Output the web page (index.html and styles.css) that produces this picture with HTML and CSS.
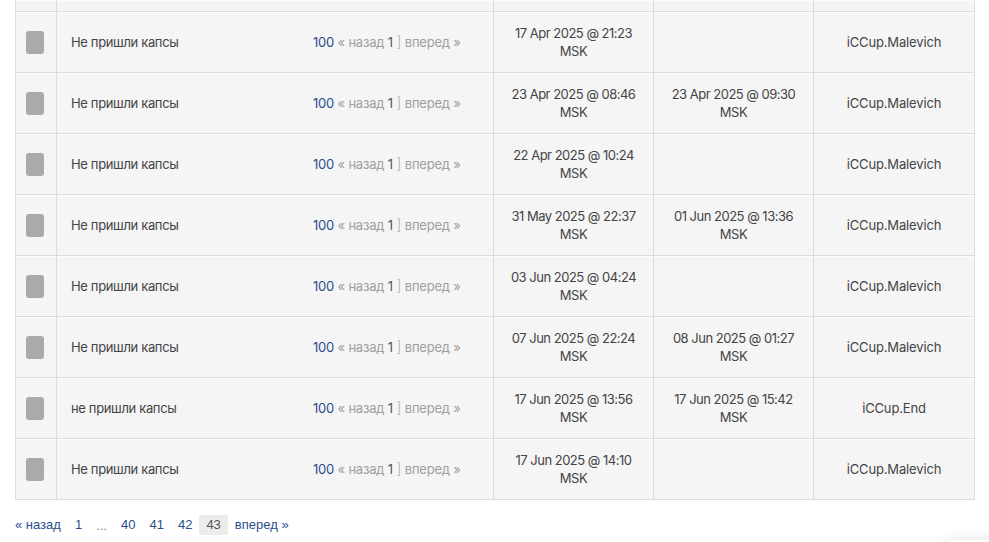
FILE: index.html
```html
<!DOCTYPE html>
<html lang="ru">
<head>
<meta charset="utf-8">
<title>Тикеты</title>
<link rel="stylesheet" href="styles.css">
</head>
<body>
<div class="page">
  <table class="tickets">
    <colgroup>
      <col class="c-check"><col class="c-subj"><col class="c-date"><col class="c-date"><col class="c-admin">
    </colgroup>
    <tbody>
      <tr class="row-cut"><td></td><td></td><td></td><td></td><td></td></tr>
      <tr>
        <td class="cell-check"><span class="box"></span></td>
        <td><div class="subj"><span class="title">Не пришли капсы</span><span class="pager"><a class="num">100</a> « назад <span class="cur">1</span> <span class="br">]</span> вперед »</span></div></td>
        <td class="cell-c"><span class="date">17 Apr 2025 @ 21:23<br>MSK</span></td>
        <td class="cell-c"></td>
        <td class="cell-c"><span class="admin">iCCup.Malevich</span></td>
      </tr>
      <tr>
        <td class="cell-check"><span class="box"></span></td>
        <td><div class="subj"><span class="title">Не пришли капсы</span><span class="pager"><a class="num">100</a> « назад <span class="cur">1</span> <span class="br">]</span> вперед »</span></div></td>
        <td class="cell-c"><span class="date">23 Apr 2025 @ 08:46<br>MSK</span></td>
        <td class="cell-c"><span class="date">23 Apr 2025 @ 09:30<br>MSK</span></td>
        <td class="cell-c"><span class="admin">iCCup.Malevich</span></td>
      </tr>
      <tr>
        <td class="cell-check"><span class="box"></span></td>
        <td><div class="subj"><span class="title">Не пришли капсы</span><span class="pager"><a class="num">100</a> « назад <span class="cur">1</span> <span class="br">]</span> вперед »</span></div></td>
        <td class="cell-c"><span class="date">22 Apr 2025 @ 10:24<br>MSK</span></td>
        <td class="cell-c"></td>
        <td class="cell-c"><span class="admin">iCCup.Malevich</span></td>
      </tr>
      <tr>
        <td class="cell-check"><span class="box"></span></td>
        <td><div class="subj"><span class="title">Не пришли капсы</span><span class="pager"><a class="num">100</a> « назад <span class="cur">1</span> <span class="br">]</span> вперед »</span></div></td>
        <td class="cell-c"><span class="date">31 May 2025 @ 22:37<br>MSK</span></td>
        <td class="cell-c"><span class="date">01 Jun 2025 @ 13:36<br>MSK</span></td>
        <td class="cell-c"><span class="admin">iCCup.Malevich</span></td>
      </tr>
      <tr>
        <td class="cell-check"><span class="box"></span></td>
        <td><div class="subj"><span class="title">Не пришли капсы</span><span class="pager"><a class="num">100</a> « назад <span class="cur">1</span> <span class="br">]</span> вперед »</span></div></td>
        <td class="cell-c"><span class="date">03 Jun 2025 @ 04:24<br>MSK</span></td>
        <td class="cell-c"></td>
        <td class="cell-c"><span class="admin">iCCup.Malevich</span></td>
      </tr>
      <tr>
        <td class="cell-check"><span class="box"></span></td>
        <td><div class="subj"><span class="title">Не пришли капсы</span><span class="pager"><a class="num">100</a> « назад <span class="cur">1</span> <span class="br">]</span> вперед »</span></div></td>
        <td class="cell-c"><span class="date">07 Jun 2025 @ 22:24<br>MSK</span></td>
        <td class="cell-c"><span class="date">08 Jun 2025 @ 01:27<br>MSK</span></td>
        <td class="cell-c"><span class="admin">iCCup.Malevich</span></td>
      </tr>
      <tr>
        <td class="cell-check"><span class="box"></span></td>
        <td><div class="subj"><span class="title">не пришли капсы</span><span class="pager"><a class="num">100</a> « назад <span class="cur">1</span> <span class="br">]</span> вперед »</span></div></td>
        <td class="cell-c"><span class="date">17 Jun 2025 @ 13:56<br>MSK</span></td>
        <td class="cell-c"><span class="date">17 Jun 2025 @ 15:42<br>MSK</span></td>
        <td class="cell-c"><span class="admin">iCCup.End</span></td>
      </tr>
      <tr>
        <td class="cell-check"><span class="box"></span></td>
        <td><div class="subj"><span class="title">Не пришли капсы</span><span class="pager"><a class="num">100</a> « назад <span class="cur">1</span> <span class="br">]</span> вперед »</span></div></td>
        <td class="cell-c"><span class="date">17 Jun 2025 @ 14:10<br>MSK</span></td>
        <td class="cell-c"></td>
        <td class="cell-c"><span class="admin">iCCup.Malevich</span></td>
      </tr>
    </tbody>
  </table>
  <nav class="pagination">
    <a class="pg">« назад</a>
    <a class="pg">1</a>
    <span class="dots">...</span>
    <a class="pg">40</a>
    <a class="pg">41</a>
    <a class="pg">42</a>
    <span class="pg current">43</span>
    <a class="pg">вперед »</a>
  </nav>
</div>
<div class="float-widget"></div>
</body>
</html>
```
FILE: styles.css
```css
html, body {
  margin: 0;
  padding: 0;
  background: #ffffff;
}
body {
  font-family: Inter, "Noto Sans", sans-serif;
  font-size: 13px;
  color: #444;
  overflow: hidden;
}
.page {
  padding: 0 15px;
}
.tickets {
  width: 959px;
  border-collapse: collapse;
  table-layout: fixed;
}
.c-check { width: 41px; }
.c-subj { width: 437px; }
.c-date { width: 160px; }
.c-admin { width: 161px; }
.tickets td {
  border: 1px solid #dcdcdc;
  background: #f5f5f5;
  height: 60px;
  padding: 0;
  vertical-align: middle;
  box-shadow: inset 0 1px 0 #fcfcfc;
  line-height: 18px;
}
.tickets .row-cut td {
  height: 11px;
  border-top: none;
}
.cell-check {
  text-align: left;
}
.box {
  display: block;
  width: 18px;
  height: 23px;
  margin-left: 10px;
  margin-top: 1px;
  background: #aaaaaa;
  border-radius: 3px;
}
.subj {
  display: flex;
  align-items: center;
  padding-left: 14px;
}
.title {
  width: 242px;
  color: #444;
  letter-spacing: -0.35px;
}
.pager {
  color: #a0a0a0;
  letter-spacing: -0.2px;
}
.num {
  color: #2a4d8f;
}
.cur {
  color: #555;
}
.br {
  color: #b5b5b5;
  font-weight: 300;
  font-size: 15px;
}
.cell-c {
  text-align: center;
  color: #444;
}
.date {
  letter-spacing: -0.5px;
}
.admin {
  letter-spacing: -0.15px;
}
.pagination {
  display: flex;
  align-items: center;
  height: 50px;
  font-family: "Liberation Sans", Arial, sans-serif;
  font-size: 13px;
}
.pg {
  color: #2a4d8f;
  padding: 3px 7px;
  line-height: 14px;
}
.pg:first-child {
  padding-left: 0;
}
.dots {
  color: #888;
  padding: 3px 7px;
}
.current {
  background: #ececec;
  color: #555;
  border-radius: 2px;
}
.float-widget {
  position: fixed;
  right: -20px;
  top: 540px;
  width: 60px;
  height: 40px;
  background: #fff;
  box-shadow: 0 0 14px rgba(0,0,0,0.12);
}
```
